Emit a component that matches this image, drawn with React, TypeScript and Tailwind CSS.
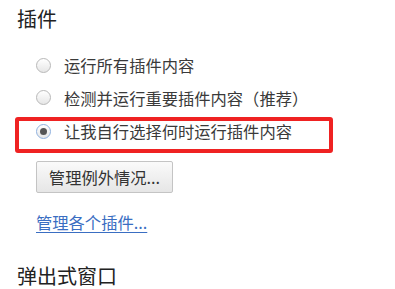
import React from "react";

const font = { fontFamily: '"Noto Sans CJK SC", "Noto Sans", sans-serif' };

function Radio({ checked }: { checked?: boolean }) {
  return (
    <span
      className={
        "flex h-[15px] w-[15px] shrink-0 items-center justify-center rounded-full border bg-gradient-to-b from-white to-[#e6e6e6] " +
        (checked ? "border-[#8fb1de]" : "border-[#b8b8b8]")
      }
    >
      {checked && <span className="h-[7px] w-[7px] rounded-full bg-[#555555]" />}
    </span>
  );
}

export default function App() {
  return (
    <div
      className="h-[289px] w-[395px] overflow-hidden bg-white pl-[17px] pt-[5px] text-[#3a3a3a]"
      style={font}
    >
      <div className="h-[28px] text-[20px] leading-[28px] text-[#222222]">插件</div>
      <div className="mt-[16px] flex flex-col">
        <div className="flex h-[32px] items-center pl-[19px]">
          <Radio />
          <span className="ml-[13px] text-[16.3px] leading-[22px]">运行所有插件内容</span>
        </div>
        <div className="flex h-[33px] items-center pl-[19px]">
          <Radio />
          <span className="ml-[13px] text-[16.3px] leading-[22px]">检测并运行重要插件内容（推荐）</span>
        </div>
        <div className="mt-[3px] ml-[-2px] h-[36px] w-[318px] rounded-[3px] border-[4px] border-[#ef2222] pl-[17px]">
          <div className="flex h-[20px] items-center">
            <Radio checked />
            <span className="ml-[13px] text-[16.3px] leading-[22px]">让我自行选择何时运行插件内容</span>
          </div>
        </div>
      </div>
      <button
        className="mt-[8px] ml-[19px] flex h-[32px] w-[137px] items-center justify-center rounded-[2px] border border-[#c4c4c4] bg-gradient-to-b from-[#fafafa] to-[#e6e6e6] text-[16.3px] leading-[22px] text-[#333333]"
        style={font}
      >
        管理例外情况...
      </button>
      <div className="mt-[18px] ml-[19px] h-[22px] text-[16.3px] leading-[22px]">
        <a className="text-[#3a6ec2] underline underline-offset-[3px]" href="#">
          管理各个插件...
        </a>
      </div>
      <div className="mt-[29px] h-[28px] text-[20px] leading-[28px] text-[#222222]">弹出式窗口</div>
    </div>
  );
}
